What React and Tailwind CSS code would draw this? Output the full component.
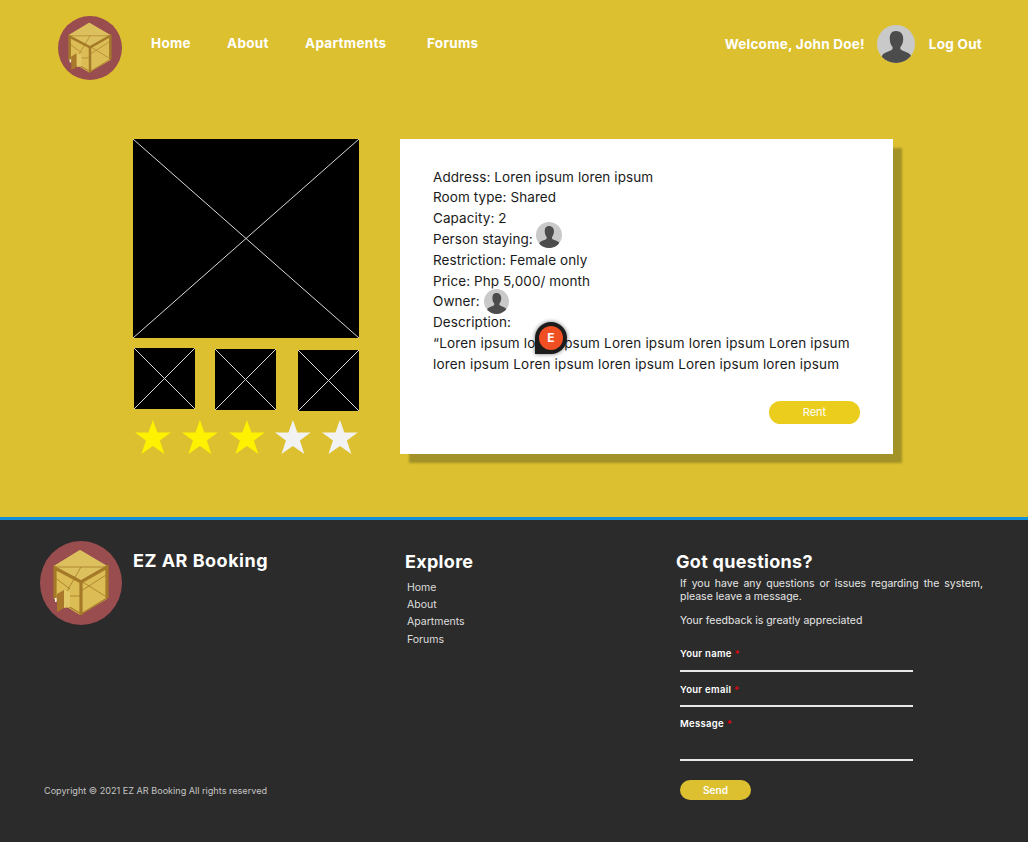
const font = { fontFamily: 'Inter, "Open Sans", sans-serif' }

function Logo({ className }) {
  return (
    <svg viewBox="0 0 82 84" preserveAspectRatio="none" className={className}>
      <ellipse cx="41" cy="42" rx="41" ry="42" fill="#9a4d4f" />
      <polygon points="40,9 67,25 67,58 40,74 14,58 14,25" fill="#dcbc55" />
      <polygon points="40,9 67,25 41,40 14,25" fill="#dcc05e" />
      <g stroke="#a57b28" strokeWidth="0.8" fill="none">
        <line x1="14" y1="26" x2="67" y2="26" />
        <line x1="41" y1="26" x2="27" y2="50" />
        <line x1="14" y1="36" x2="30" y2="48" />
        <line x1="41" y1="40" x2="65" y2="55" />
        <line x1="41" y1="55" x2="14" y2="55" />
        <line x1="41" y1="50" x2="66" y2="34" />
      </g>
      <g stroke="#a47a28" strokeWidth="3.2" fill="none">
        <polyline points="15,57 15,27 41,41 67,26 67,57" />
        <line x1="41" y1="41" x2="41" y2="74" />
      </g>
      <g stroke="#a47a28" strokeWidth="1.2" fill="none">
        <line x1="15" y1="57" x2="41" y2="73" />
        <line x1="41" y1="73" x2="67" y2="57" />
      </g>
      <polygon points="17,53 24,49 24,67 17,71" fill="#a9782a" />
      <polygon points="24,49 30,51 30,66 24,67" fill="#e2c766" />
      <rect x="15" y="57" width="1.6" height="4" fill="#f3f0e0" />
    </svg>
  )
}

function Avatar({ className }) {
  return (
    <svg viewBox="0 0 38 38" className={className}>
      <clipPath id="avatar-clip">
        <circle cx="19" cy="19" r="19" />
      </clipPath>
      <g clipPath="url(#avatar-clip)">
        <rect width="38" height="38" fill="#c9c9c9" />
        <path
          d="M19 6c4.6 0 7.4 3.3 7.2 8 0 3-.9 5.6-2.4 7.6-.8 1-.7 2.800.6 3.500 2.700 1.400 6.600 2.300 8.600 4.100 1.300 1.200 1.900 3.800 1.900 8.800H4.100c0-5 .6-7.600 1.900-8.800 2-1.800 5.900-2.700 8.600-4.100 1.300-.7 1.400-2.500.6-3.500-1.500-2-2.400-4.600-2.400-7.600C12.600 9.300 14.400 6 19 6z"
          fill="#4c4c4c"
        />
      </g>
    </svg>
  )
}

function Placeholder({ className }) {
  return (
    <svg viewBox="0 0 100 100" preserveAspectRatio="none" className={className}>
      <rect width="100" height="100" fill="#000" />
      <g stroke="#d8d8d8" strokeWidth="1">
        <line x1="0" y1="0" x2="100" y2="100" vectorEffect="non-scaling-stroke" />
        <line x1="100" y1="0" x2="0" y2="100" vectorEffect="non-scaling-stroke" />
      </g>
    </svg>
  )
}

function Star({ color }) {
  return (
    <svg viewBox="0 0 38 36" className="w-[38px] h-[36px]">
      <polygon points="19,1 23.500,13.500 37,13.500 26,21.500 30.500,35 19,27 7.500,35 12,21.500 1,13.500 14.500,13.500" fill={color} />
    </svg>
  )
}

function Header() {
  return (
    <header className="flex items-start h-[139px] pl-[58px] pr-[46px] pt-[16px]">
      <Logo className="w-[64px] h-[64px]" />
      <nav className="flex ml-[29px] mt-[17px] text-[13.5px] font-bold text-white tracking-[0.3px]">
        <span className="w-[76px]">Home</span>
        <span className="w-[78px]">About</span>
        <span className="w-[122px]">Apartments</span>
        <span>Forums</span>
      </nav>
      <div className="ml-auto flex items-center mt-[9px] text-[13.5px] font-bold text-white tracking-[0.25px]">
        <span className="mt-[1px]">Welcome, John Doe!</span>
        <Avatar className="w-[38px] h-[38px] ml-[12px] mr-[14px]" />
        <span className="mt-[1px]">Log Out</span>
      </div>
    </header>
  )
}

function Gallery() {
  return (
    <div className="w-[226px] shrink-0">
      <Placeholder className="w-[226px] h-[199px] block" />
      <div className="flex items-start mt-[10px] h-[63px]">
        <Placeholder className="w-[61px] h-[61px] ml-[1px]" />
        <Placeholder className="w-[61px] h-[61px] ml-[20px] mt-[1px]" />
        <Placeholder className="w-[61px] h-[61px] ml-[22px] mt-[2px]" />
      </div>
      <div className="flex gap-[9px] mt-[8px] ml-[1px]">
        <Star color="#fff200" />
        <Star color="#fff200" />
        <Star color="#fff200" />
        <Star color="#f2f2f2" />
        <Star color="#f2f2f2" />
      </div>
    </div>
  )
}

function Details() {
  return (
    <div className="relative ml-[41px] w-[493px] h-[315px] bg-white shadow-[9px_9px_2px_#a39228] pl-[33px] pt-[27.7px] text-[13.5px] leading-[20.8px] tracking-[0.09px] text-[#1a1a1a]">
      <p>Address: Loren ipsum loren ipsum</p>
      <p>Room type: Shared</p>
      <p>Capacity: 2</p>
      <p className="flex items-center h-[20.8px]">
        Person staying:
        <Avatar className="w-[26px] h-[26px] ml-[3px] -mt-[8px]" />
      </p>
      <p>Restriction: Female only</p>
      <p>Price: Php 5,000/ month</p>
      <p className="flex items-center h-[20.8px]">
        Owner:
        <Avatar className="w-[25px] h-[25px] ml-[4px] -mt-[1px]" />
      </p>
      <p>Description:</p>
      <p className="w-[430px] tracking-[0.18px]">
        “Loren ipsum loren ipsum Loren ipsum loren ipsum Loren ipsum loren ipsum Loren ipsum loren ipsum Loren ipsum loren ipsum
      </p>
      <div className="flex justify-end pr-[33px] mt-[26px]">
        <button className="w-[91px] h-[23px] rounded-full bg-[#ebcd1d] text-white text-[11px] tracking-normal">Rent</button>
      </div>
      {/* floating marker sits over the description text */}
      <div className="absolute left-[135px] top-[183px] w-[32px] h-[32px] rounded-full rounded-bl-none bg-[#1c1c1c] flex items-center justify-center shadow-[0_0_4px_#0000008c]">
        <div className="w-[24px] h-[24px] rounded-full bg-[#f04e23] text-white text-[12px] font-bold flex items-center justify-center">E</div>
      </div>
    </div>
  )
}

function Field({ label, className }) {
  return (
    <div className={className}>
      <div className="text-[9.5px] leading-[12px] font-semibold tracking-[0.3px] text-white">
        {label} <span className="text-red-600">*</span>
      </div>
    </div>
  )
}

function Footer() {
  return (
    <footer className="flex h-[322px] bg-[#2b2b2b] text-white border-t-[3px] border-[#0f8fd8] box-content -mt-[3px]">
      <div className="w-[405px] shrink-0 pl-[40px] pt-[21px] flex flex-col">
        <div className="flex items-start">
          <Logo className="w-[82px] h-[84px]" />
          <h2 className="ml-[11px] mt-[9px] text-[18px] leading-[22px] font-bold tracking-[0.5px]">EZ AR Booking</h2>
        </div>
        <p className="mt-[160px] ml-[4px] text-[9.1px] leading-[12px] text-[#c4c4c4]">Copyright © 2021 EZ AR Booking All rights reserved</p>
      </div>
      <div className="w-[271px] shrink-0 pt-[31px]">
        <h2 className="text-[18px] leading-[22px] font-bold tracking-[0.3px]">Explore</h2>
        <ul className="ml-[2px] mt-[6px] text-[10.500px] leading-[17.200px] text-[#dedede]">
          <li>Home</li>
          <li>About</li>
          <li>Apartments</li>
          <li>Forums</li>
        </ul>
      </div>
      <div className="flex-1 pt-[31px] pr-[45px]">
        <h2 className="text-[18px] leading-[22px] font-bold tracking-[0.3px]">Got questions?</h2>
        <div className="ml-[4px] mt-[5px] text-[10.500px] text-[#e6e6e6]">
          <p className="leading-[12.500px] text-justify">If you have any questions or issues regarding the system, please leave a message.</p>
          <p className="mt-[11px] leading-[13px]">Your feedback is greatly appreciated</p>
          <Field label="Your name" className="mt-[21px] w-[233px] h-[24px] border-b-2 border-[#e8e8e8]" />
          <Field label="Your email" className="mt-[12px] w-[233px] h-[23px] border-b-2 border-[#e8e8e8]" />
          <Field label="Message" className="mt-[11px] w-[233px] h-[43px] border-b-2 border-[#e8e8e8]" />
          <button className="mt-[19px] w-[71px] h-[20px] rounded-full bg-[#dcc030] text-white text-[10px] font-semibold">Send</button>
        </div>
      </div>
    </footer>
  )
}

export default function App() {
  return (
    <div style={font} className="w-[1028px] h-[842px] overflow-hidden bg-[#dcc030]">
      <Header />
      <main className="flex h-[381px] pl-[133px]">
        <Gallery />
        <Details />
      </main>
      <Footer />
    </div>
  )
}
